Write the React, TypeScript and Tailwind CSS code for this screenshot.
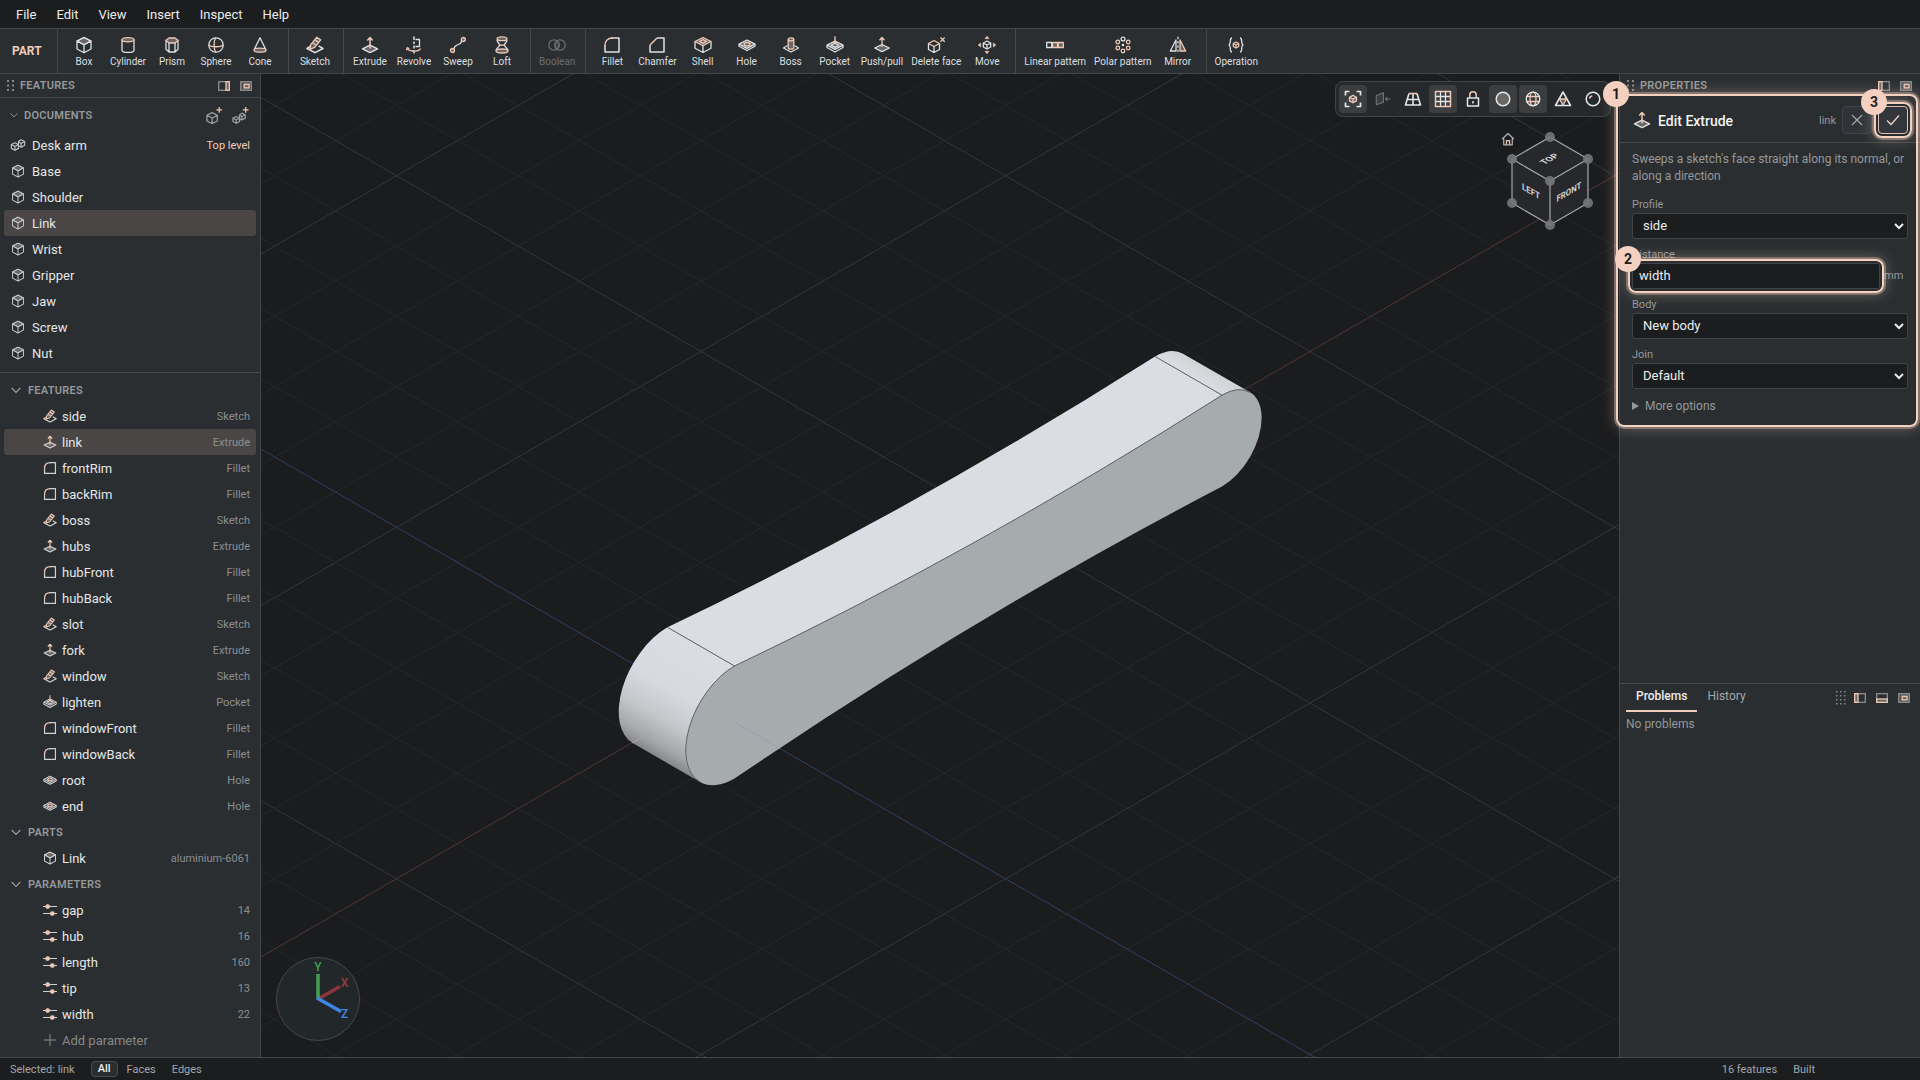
import React from 'react';

const W = '#dde1e3';
const P = '#efc9b6';
const D = '#6b6665';

type IconName =
  | 'box' | 'cylinder' | 'prism' | 'sphere' | 'cone' | 'sketch' | 'extrude' | 'revolve' | 'sweep' | 'loft'
  | 'boolean' | 'fillet' | 'chamfer' | 'shell' | 'hole' | 'boss' | 'pocket' | 'pushpull' | 'deleteface' | 'move'
  | 'linear' | 'polar' | 'mirror' | 'operation' | 'assembly' | 'param' | 'plus' | 'newPart' | 'newAssembly'
  | 'fit' | 'normal' | 'persp' | 'grid' | 'lock' | 'shaded' | 'wire' | 'mesh' | 'material' | 'home';

const icons: Record<IconName, React.ReactNode> = {
  box: (
    <>
      <path d="M9 1.5 16 5 9 8.800 2 5z" fill={D} />
      <path d="M9 1.5 16 5v8l-7 3.700L2 13V5zM2 5l7 3.800L16 5M9 8.800v7.900" />
    </>
  ),
  cylinder: (
    <>
      <path d="M3 3.6v10.600c0 1.300 2.600 2.200 6 2.200s6-.9 6-2.200V3.600" />
      <ellipse cx="9" cy="3.7" rx="6" ry="2.1" stroke={P} fill={D} />
    </>
  ),
  prism: (
    <>
      <path d="M3 4.200v9l3 2.800h6l3-2.800v-9M6 7v9M12 7v9" />
      <path d="M6 2h6l3 2.300L12 7H6L3 4.300z" stroke={P} fill={D} />
    </>
  ),
  sphere: (
    <>
      <circle cx="9" cy="9" r="7.2" />
      <path d="M9 1.800C6.500 4 6.500 14 9 16.200M1.800 9c2.500 2.300 11.900 2.300 14.400 0" stroke={P} />
    </>
  ),
  cone: (
    <>
      <path d="M3 14 9 1.800 15 14" />
      <ellipse cx="9" cy="14.2" rx="6" ry="2" stroke={P} fill={D} />
    </>
  ),
  sketch: (
    <>
      <path d="M4.500 10.200 1 12.500l8 4.200 8-4.200-4.500-2.600" strokeWidth="1.5" />
      <path d="m3.800 13.300.9-4.600L10.700 1.300l4 2.600-6 7.400z" stroke={P} fill={D} />
      <path d="m8.800 3.800 4 2.600M6.500 6.700l3.800 2.500" stroke={P} />
    </>
  ),
  extrude: (
    <>
      <path d="M9 9.200 16.500 12.900 9 16.600 1.500 12.900z" fill={D} strokeWidth="1.5" />
      <path d="M9 12.600V2M6.300 4.500 9 1.600l2.700 2.900" stroke={P} strokeWidth="1.5" />
    </>
  ),
  revolve: (
    <>
      <path d="M9 .5V4M9 5.500V8M9 9.500v3M9 14v3.500" strokeWidth="1.5" />
      <path d="M10.500 3.500h4v7h-4" />
      <path d="M2 11.500c0 4 12 5 13.500 1M2 11.500l-.3 2.700M2 11.500l2.300 1.200" stroke={P} />
    </>
  ),
  sweep: (
    <>
      <path d="M4.800 13C6 7 11 10.500 13 5" />
      <circle cx="3.500" cy="14.500" r="2" stroke={P} fill={D} />
      <circle cx="14.300" cy="3.500" r="2" stroke={P} fill={D} />
    </>
  ),
  loft: (
    <>
      <path d="M4 4c0 2.500 2.500 3 2.500 5S3.500 12 3 14.500M14 4c0 2.500-2.500 3-2.500 5s3 3 3.500 5.500" />
      <ellipse cx="9" cy="2.8" rx="5" ry="1.9" stroke={P} fill={D} />
      <ellipse cx="9" cy="15" rx="6" ry="2" stroke={P} fill={D} />
      <path d="M6.500 8.500c1 1 4 1 5 0" stroke={P} />
    </>
  ),
  boolean: (
    <>
      <path d="M9 4.700a5.300 5.300 0 0 1 0 8.600 5.300 5.300 0 0 1 0-8.600z" fill={D} />
      <circle cx="6" cy="9" r="5.2" />
      <circle cx="12" cy="9" r="5.2" />
    </>
  ),
  fillet: (
    <>
      <path d="M8 2h8v14H2V9" strokeWidth="1.5" />
      <path d="M2 9.500C2 5 5 2 9.500 2" stroke={P} strokeWidth="1.5" />
    </>
  ),
  chamfer: (
    <>
      <path d="M9 2h7v14H2V9" strokeWidth="1.5" />
      <path d="M2 9 9 2" stroke={P} strokeWidth="1.5" />
    </>
  ),
  shell: (
    <>
      <path d="M1 5.500v6.700L9 16.500l8-4.300V5.500M9 10v6.500" />
      <path d="M9 1.500 17 5.500 9 9.800 1 5.500zM5.500 5.500 9 3.700l3.500 1.800L9 7.400z" stroke={P} fill={D} />
    </>
  ),
  hole: (
    <>
      <path d="M9 4 17 8.200 9 12.400 1 8.200z" fill={D} />
      <path d="M1 8.200v2L9 14.500l8-4.300v-2" />
      <ellipse cx="9" cy="8.2" rx="3" ry="1.7" stroke={P} />
    </>
  ),
  boss: (
    <>
      <path d="M5.500 9.500 1.500 12 9 16l7.500-4-4-2.500" />
      <path d="M6.200 3.500v8.300c0 1.800 5.600 1.800 5.600 0V3.500" stroke={P} fill={D} />
      <ellipse cx="9" cy="3.3" rx="2.8" ry="1.5" stroke={P} fill={D} />
    </>
  ),
  pocket: (
    <>
      <path d="M9 5 17 9.200 9 13.400 1 9.200z" fill={D} />
      <path d="M1 9.200v2.300L9 16l8-4.500V9.200M5 9.200 9 7l4 2.200L9 11.400z" />
      <path d="M9 .3v7.200M7.300 5.800 9 7.700l1.700-1.900" stroke={P} />
    </>
  ),
  pushpull: (
    <>
      <path d="M9 8.500 16.300 12 9 15.700 1.700 12z" fill={D} />
      <path d="M9 11V1.800M6.500 4.300 9 1.500l2.500 2.800" stroke={P} />
    </>
  ),
  deleteface: (
    <>
      <path d="M1.500 7.500v6L7 16.500l5.500-3v-6M7 10.500v6" />
      <path d="M7 4.500 12.500 7.500 7 10.500 1.500 7.500z" stroke={P} />
      <path d="m13.500 1.500 4.200 4.200M17.700 1.500l-4.200 4.200" stroke={P} />
    </>
  ),
  move: (
    <>
      <path d="m9 5 3.700 2v4L9 13l-3.700-2V7zM5.300 7 9 9l3.700-2M9 9v4" />
      <path d="M9 .2 7 2.700h4zM9 17.800l2-2.500H7zM.2 9l2.500-2v4zM17.800 9l-2.500 2V7z" fill={P} stroke={P} strokeWidth=".6" />
    </>
  ),
  linear: (
    <>
      <path d="M6.500 6.500h5v5h-5zM12.300 6.500h5v5h-5z" stroke={P} fill={D} />
      <path d="M.7 6.500h5v5h-5z" />
    </>
  ),
  polar: (
    <>
      <circle cx="9" cy="3" r="1.9" />
      <g stroke={P}>
        <circle cx="14.2" cy="6" r="1.8" />
        <circle cx="14.2" cy="12" r="1.8" />
        <circle cx="9" cy="15" r="1.8" />
        <circle cx="3.8" cy="12" r="1.8" />
        <circle cx="3.8" cy="6" r="1.8" />
      </g>
      <circle cx="9" cy="9" r=".7" fill={W} />
    </>
  ),
  mirror: (
    <>
      <path d="M7 4v11H1.300z" />
      <path d="M11 4v11h5.700z" stroke={P} fill={D} />
      <path d="M9 .8v2.500M9 5v2.500M9 9.300v2.500M9 13.500V16" />
    </>
  ),
  operation: (
    <>
      <path d="M5 2C2 2 4.500 8 2 9c2.500 1 0 7 3 7M13 2c3 0 .5 6 3 7-2.500 1 0 7-3 7" />
      <path d="m9 6 2.700 1.500v3L9 12l-2.700-1.500v-3zM6.300 7.500 9 9l2.700-1.500M9 9v3" stroke={P} />
    </>
  ),
  assembly: (
    <>
      <path d="m5.500 6.500 4 2v4.300l-4 2.200-4-2.200V8.500zM1.500 8.500l4 2.200 4-2.200M5.500 10.700V15" />
      <path d="m12.500 3 4 2v4.300l-4 2.200-3-1.600V5zM9 5l3.500 2.200L16.500 5M12.500 7.200v4.300" />
    </>
  ),
  param: (
    <>
      <path d="M0 4.500h18M0 13.500h18" strokeWidth="1.6" />
      <circle cx="6" cy="4.500" r="2.4" fill={P} stroke={P} />
      <circle cx="12" cy="13.500" r="2.4" fill={P} stroke={P} />
    </>
  ),
  plus: <path d="M9 1v16M1 9h16" />,
  newPart: (
    <>
      <path d="M6.500 6 12 8.800v6L6.500 17.600 1 14.800v-6zM1 8.800l5.500 2.900L12 8.800M6.500 11.700v5.900" />
      <path d="M14 0v6M11 3h6" stroke={P} />
    </>
  ),
  newAssembly: (
    <>
      <path d="m4.500 10 3.500 1.700v3.600l-3.500 2-3.500-2v-3.600zM1 11.700l3.500 1.900L8 11.700M4.500 13.600v3.700M10.500 6.500 14 8.200v3.600l-3.500 2L8 12.300V8.200zM7.500 8.200l3 1.900L14 8.200M10.500 10.100v3.700" />
      <path d="M14.500 0v6M11.500 3h6" stroke={P} />
    </>
  ),
  fit: (
    <>
      <path d="M1.500 5.500v-4h4M12.500 1.500h4v4M16.500 12.500v4h-4M5.500 16.500h-4v-4" strokeWidth="1.7" />
      <path d="m9 5.200 3.500 2v3.700L9 12.800l-3.500-1.900V7.200zM5.500 7.200 9 9l3.500-1.800M9 9v3.800" stroke={P} fill={D} />
    </>
  ),
  normal: (
    <>
      <path d="M1.500 5 9.500 2v10.500l-8 3z" fill="#3a3d3f" />
      <path d="M17.500 9H12M14 6.800 11.800 9 14 11.200" />
    </>
  ),
  persp: (
    <>
      <path d="M5 3.500 1.500 15h15L13 3.500M9 3.500V15M3.200 9.500h11.600" strokeWidth="1.6" />
      <path d="M5 3.500h8" stroke={P} strokeWidth="1.6" />
    </>
  ),
  grid: (
    <>
      <path d="M6.500 1.500v15M11.500 1.500v15M1.500 6.500h15M1.500 11.500h15" />
      <path d="M1.500 1.500h15v15h-15z" stroke={P} strokeWidth="1.5" />
    </>
  ),
  lock: (
    <>
      <path d="M3.500 8h11v8h-11zM9 11v2.500" strokeWidth="1.5" />
      <path d="M5.800 8V5a3.200 3.200 0 0 1 6.400 0v3" stroke={P} strokeWidth="1.5" />
    </>
  ),
  shaded: <circle cx="9" cy="9" r="6.8" fill="#6a6867" strokeWidth="1.5" />,
  wire: (
    <>
      <g stroke={P}>
        <ellipse cx="9" cy="9" rx="3" ry="6.8" />
        <path d="M2.500 6.500h13M2.500 11.500h13" />
      </g>
      <circle cx="9" cy="9" r="6.8" />
    </>
  ),
  mesh: (
    <>
      <path d="M9 2 16.500 15.500h-15z" strokeWidth="1.6" />
      <path d="M5.500 9h7L9 15.300zM5.500 9 9 15.300" stroke={P} fill={D} />
    </>
  ),
  material: (
    <>
      <circle cx="9" cy="9" r="6.8" strokeWidth="1.5" />
      <path d="M5.500 8.500c.3-1.600 1.200-2.500 2.800-2.800" stroke={P} strokeWidth="1.6" />
    </>
  ),
  home: (
    <>
      <path d="M1.500 9 9 2l7.500 7M3.500 8v8.500h11V8" strokeWidth="1.6" />
      <path d="M7 16.500V11h4v5.500" stroke={P} strokeWidth="1.6" />
    </>
  ),
};

function Icon({ name, className = 'size-[18px]', color = W }: { name: IconName; className?: string; color?: string }) {
  return (
    <svg
      viewBox="0 0 18 18"
      className={`${className} shrink-0`}
      fill="none"
      stroke={color}
      strokeWidth="1.3"
      strokeLinejoin="round"
      aria-hidden="true"
    >
      {icons[name]}
    </svg>
  );
}

type Tool = [IconName, string];
const toolGroups: Tool[][] = [
  [['box', 'Box'], ['cylinder', 'Cylinder'], ['prism', 'Prism'], ['sphere', 'Sphere'], ['cone', 'Cone']],
  [['sketch', 'Sketch']],
  [['extrude', 'Extrude'], ['revolve', 'Revolve'], ['sweep', 'Sweep'], ['loft', 'Loft']],
  [['boolean', 'Boolean']],
  [
    ['fillet', 'Fillet'], ['chamfer', 'Chamfer'], ['shell', 'Shell'], ['hole', 'Hole'], ['boss', 'Boss'],
    ['pocket', 'Pocket'], ['pushpull', 'Push/pull'], ['deleteface', 'Delete face'], ['move', 'Move'],
  ],
  [['linear', 'Linear pattern'], ['polar', 'Polar pattern'], ['mirror', 'Mirror']],
  [['operation', 'Operation']],
];

const documents = ['Base', 'Shoulder', 'Link', 'Wrist', 'Gripper', 'Jaw', 'Screw', 'Nut'];

const features: [string, string, IconName][] = [
  ['side', 'Sketch', 'sketch'],
  ['link', 'Extrude', 'extrude'],
  ['frontRim', 'Fillet', 'fillet'],
  ['backRim', 'Fillet', 'fillet'],
  ['boss', 'Sketch', 'sketch'],
  ['hubs', 'Extrude', 'extrude'],
  ['hubFront', 'Fillet', 'fillet'],
  ['hubBack', 'Fillet', 'fillet'],
  ['slot', 'Sketch', 'sketch'],
  ['fork', 'Extrude', 'extrude'],
  ['window', 'Sketch', 'sketch'],
  ['lighten', 'Pocket', 'pocket'],
  ['windowFront', 'Fillet', 'fillet'],
  ['windowBack', 'Fillet', 'fillet'],
  ['root', 'Hole', 'hole'],
  ['end', 'Hole', 'hole'],
];

const parameters: [string, number][] = [['gap', 14], ['hub', 16], ['length', 160], ['tip', 13], ['width', 22]];

const viewTools: [IconName, string, boolean][] = [
  ['fit', 'Zoom to fit', true],
  ['normal', 'Look at face', false],
  ['persp', 'Perspective', false],
  ['grid', 'Grid', true],
  ['lock', 'Lock view', false],
  ['shaded', 'Shaded', true],
  ['wire', 'Edges', true],
  ['mesh', 'Mesh', false],
  ['material', 'Material', false],
];

function Chevron({ className }: { className: string }) {
  return (
    <svg viewBox="0 0 10 10" className={className} fill="none" stroke="#9a9da0" strokeWidth="1.2" aria-hidden="true">
      <path d="M.7 3 5 7.300 9.300 3" />
    </svg>
  );
}

function Grip() {
  return (
    <svg viewBox="0 0 7 11" className="h-[11px] w-[7px]" fill="#85888a" aria-hidden="true">
      {[0, 4.5, 9].map((y) => (
        <React.Fragment key={y}>
          <rect x="0" y={y} width="2" height="2" />
          <rect x="5" y={y} width="2" height="2" />
        </React.Fragment>
      ))}
    </svg>
  );
}

function DockButton({ side }: { side: 'left' | 'right' | 'bottom' | 'float' }) {
  return (
    <button type="button" aria-label={`Dock ${side}`} className="h-[10px] w-3">
      <svg viewBox="0 0 12 10" className="h-[10px] w-3" fill="none" stroke="#8b8d8f" strokeWidth="1.3">
        <rect x=".7" y=".7" width="10.6" height="8.6" fill={side === 'float' ? '#55504f' : 'none'} />
        {side === 'left' && <rect x=".7" y=".7" width="3.3" height="8.6" stroke={P} fill={D} />}
        {side === 'right' && <rect x="8" y=".7" width="3.3" height="8.6" stroke={P} fill={D} />}
        {side === 'bottom' && <rect x=".7" y="6" width="10.6" height="3.3" stroke={P} fill={D} />}
        {side === 'float' && <rect x="4.2" y="3.3" width="4.8" height="3.6" stroke={P} fill={D} />}
      </svg>
    </button>
  );
}

function SectionTitle({ children }: { children: React.ReactNode }) {
  return (
    <h3 className="flex h-[26px] items-center gap-[7px] pl-[11px] text-[11px] font-semibold tracking-wide text-[#95989a]">
      <Chevron className="size-[10px]" />
      <span className="pt-0.5">{children}</span>
    </h3>
  );
}

function TreeRow({ icon, label, note, selected }: { icon: IconName; label: string; note: React.ReactNode; selected?: boolean }) {
  return (
    <li className={`mx-1 flex h-[26px] items-center rounded-[3px] pr-1.5 pl-[39px] ${selected ? 'bg-[#4a4646]' : ''}`}>
      <Icon name={icon} className="size-[14px]" color="#cfd2d4" />
      <span className="ml-[5px] flex-1 pt-0.5 text-[#e4e6e7]">{label}</span>
      <span className="pt-0.5 text-[11px] text-[#8b8e90]">{note}</span>
    </li>
  );
}

function Callout({ n, className }: { n: number; className: string }) {
  return (
    <div
      className={`pointer-events-none absolute z-20 rounded-lg border-2 border-[#f3d2c2] shadow-[0_0_0_2px_rgba(243,208,191,0.35),0_0_14px_2px_rgba(243,208,191,0.3)] ${className}`}
    >
      <span className="absolute -top-[15px] -left-[15px] flex size-[26px] items-center justify-center rounded-full bg-[#f3d0bf] text-sm font-bold text-[#1b1d1e]">
        {n}
      </span>
    </div>
  );
}

const fieldClass =
  'h-[26px] w-full rounded-[3px] border border-[#404446] bg-[#1b1d1e] px-1.5 pb-0.5 text-[13px] text-[#eceded] [color-scheme:dark]';
const labelClass = 'pt-0.5 text-[11px] leading-4 text-[#95989a]';

function SelectField({ id, label, value }: { id: string; label: string; value: string }) {
  return (
    <div className="flex flex-col">
      <label htmlFor={id} className={labelClass}>{label}</label>
      <select id={id} className={fieldClass} defaultValue={value}>
        <option>{value}</option>
      </select>
    </div>
  );
}

const OX = 701;
const OY = 703;
const GX = 121.8;
const GY = 70.3;

function GridLines() {
  const lines: React.ReactNode[] = [];
  for (let k = -22; k <= 22; k++) {
    if (k === 0) continue;
    const stroke = k % 5 === 0 ? '#33373a' : '#25282a';
    const cx = OX + k * GX;
    lines.push(
      <path key={k} stroke={stroke} d={`M${cx - 20 * GX} ${OY + 20 * GY}L${cx + 20 * GX} ${OY - 20 * GY}M${cx - 20 * GX} ${OY - 20 * GY}L${cx + 20 * GX} ${OY + 20 * GY}`} />,
    );
  }
  return <g>{lines}</g>;
}

function Model() {
  return (
    <svg viewBox="261 74 1358 983" preserveAspectRatio="xMidYMid slice" className="absolute inset-0 size-full" role="img" aria-label="Link part">
      <defs>
        <linearGradient id="hubShade" gradientUnits="userSpaceOnUse" x1="8" y1="8" x2="-11.31" y2="-11.31">
          <stop offset="0" stopColor="#dadde3" />
          <stop offset=".45" stopColor="#d6d9df" />
          <stop offset=".7" stopColor="#c3c7ca" />
          <stop offset=".9" stopColor="#a3a6a8" />
          <stop offset="1" stopColor="#858789" />
        </linearGradient>
        <linearGradient id="tipShade" gradientUnits="userSpaceOnUse" x1="86.5" y1="86.5" x2="89.2" y2="89.2">
          <stop offset="0" stopColor="#dadde3" />
          <stop offset="1" stopColor="#d0d3d5" />
        </linearGradient>
      </defs>
      <GridLines />
      <path d={`M${OX - 20 * GX} ${OY + 20 * GY}L${OX + 20 * GX} ${OY - 20 * GY}`} stroke="#54333a" />
      <path d={`M${OX - 20 * GX} ${OY - 20 * GY}L${OX + 20 * GX} ${OY + 20 * GY}`} stroke="#2e4064" />
      <g transform="matrix(3.047 -1.759 0 -3.518 734.5 722.3)">
        <path d="M0 16Q80 9 160 13L138 35Q58 31-22 38z" fill="#dadde3" />
        <path d="M0 16A16 16 0 0 1-11.310-11.310L-33.310 10.690A16 16 0 0 0-22 38z" fill="url(#hubShade)" />
        <path d="M160 13A13 13 0 0 0 169.190 9.190L147.190 31.190A13 13 0 0 1 138 35z" fill="url(#tipShade)" />
        <path d="M0 16Q80 9 160 13A13 13 0 0 0 160-13Q80-9 0-16A16 16 0 0 0 0 16z" fill="#a6abae" />
        <path
          d="M-22 38 0 16Q80 9 160 13L138 35M0 16A16 16 0 0 1-11.310-11.310M160 13A13 13 0 0 0 169.190 9.190"
          fill="none"
          stroke="#63686d"
          vectorEffect="non-scaling-stroke"
        />
      </g>
      <path d="M735 722.500 780 748.500" stroke="#9aa0b4" />
      <path d="M632 743 652 731.500" stroke="#b3a3a6" />
    </svg>
  );
}

function ViewCube() {
  return (
    <svg viewBox="0 0 90 100" className="absolute top-[57px] right-[24px] h-[100px] w-[90px]" fontFamily="Roboto, sans-serif" aria-label="View cube">
      <g stroke="#a5a7a9" strokeWidth="1.2" strokeLinejoin="round">
        <path d="M45 6 83 28 45 50 7 28zM7 28 45 50V94L7 72zM83 28 45 50V94L83 72z" fill="#26282b" />
      </g>
      <g fill="#76777a" fillOpacity=".9">
        {[[45, 6], [7, 28], [83, 28], [45, 50], [7, 72], [83, 72], [45, 94]].map(([x, y]) => (
          <circle key={`${x}-${y}`} cx={x} cy={y} r="5" />
        ))}
      </g>
      <g fill="#d0d2d3" fontSize="9" fontWeight="700" textAnchor="middle">
        <text transform="matrix(.866 -.5 .866 .5 44.5 28)" y="3">TOP</text>
        <text transform="matrix(.866 .5 0 1 26 60.5)" y="3">LEFT</text>
        <text transform="matrix(.866 -.5 0 1 64 61)" y="3">FRONT</text>
      </g>
    </svg>
  );
}

function Gizmo() {
  return (
    <svg viewBox="0 0 84 84" className="absolute bottom-4 left-[15px] size-[84px]" fontFamily="Roboto, sans-serif" fontSize="12" fontWeight="500" textAnchor="middle" aria-label="Axes">
      <circle cx="42" cy="42" r="41.5" fill="#22272a" stroke="#44484a" />
      <path d="M42 42 64 29.500" stroke="#8d363d" strokeWidth="3.5" />
      <path d="M42 42V17" stroke="#42a058" strokeWidth="3.5" />
      <path d="M41 41 65 54.500" stroke="#3d86e8" strokeWidth="3.5" />
      <text x="42" y="14" fill="#42a058">Y</text>
      <text x="68.5" y="30" fill="#9a3a41">X</text>
      <text x="68.5" y="61" fill="#3d86e8">Z</text>
    </svg>
  );
}

export default function App() {
  return (
    <div className="flex h-screen flex-col bg-[#1b1d1e] font-[Roboto,sans-serif] text-[13px] text-[#e4e6e7]">
      <nav className="flex h-[29px] shrink-0 items-center gap-5 border-b border-[#44484a] px-4 pt-0.5 text-[#eceded]">
        {['File', 'Edit', 'View', 'Insert', 'Inspect', 'Help'].map((m) => (
          <button key={m} type="button">{m}</button>
        ))}
      </nav>

      <div className="flex h-[45px] shrink-0 border-b border-[#44484a] bg-[#2a2e30]">
        <div className="flex w-[58px] items-center border-r border-[#44484a] pl-3 text-xs font-bold text-[#f0cdbb]">PART</div>
        {toolGroups.map((group, i) => (
          <div key={i} className={`flex pr-1.5 pl-1 ${i < toolGroups.length - 1 ? 'border-r border-[#44484a]' : ''}`}>
            {group.map(([icon, label]) => (
              <button
                key={label}
                type="button"
                disabled={icon === 'boolean'}
                className="flex min-w-11 flex-col items-center gap-px px-1 pt-[7px] text-[10px] leading-[14px] text-[#dcdfe0] disabled:opacity-35"
              >
                <Icon name={icon} />
                {label}
              </button>
            ))}
          </div>
        ))}
      </div>

      <div className="flex min-h-0 flex-1">
        <aside className="flex w-[261px] shrink-0 flex-col border-r border-[#44484a] bg-[#2a2e30]">
          <header className="flex h-6 shrink-0 items-center border-b border-[#44484a] pr-2 pl-[7px]">
            <Grip />
            <h2 className="ml-1.5 flex-1 pt-px text-[11px] font-semibold tracking-wide text-[#95989a]">FEATURES</h2>
            <div className="flex gap-[10px]">
              <DockButton side="right" />
              <DockButton side="float" />
            </div>
          </header>
          <section className="border-b border-[#44484a] pb-1.5">
            <div className="flex h-[34px] items-center pr-[11px] pl-[10px]">
              <Chevron className="size-2" />
              <h3 className="ml-1.5 flex-1 pt-0.5 text-[11px] font-semibold tracking-wide text-[#95989a]">DOCUMENTS</h3>
              <button type="button" aria-label="New part"><Icon name="newPart" className="size-[17px]" color="#9c9fa1" /></button>
              <button type="button" aria-label="New assembly" className="ml-[9px]"><Icon name="newAssembly" className="size-[17px]" color="#9c9fa1" /></button>
            </div>
            <ul>
              <li className="mx-1 flex h-[26px] items-center gap-1.5 pr-1.5 pl-1.5">
                <Icon name="assembly" className="size-4" color="#bfc2c4" />
                <span className="flex-1 pt-0.5">Desk arm</span>
                <span className="pt-0.5 text-[11px] text-[#f0cdbb]">Top level</span>
              </li>
              {documents.map((d) => (
                <li key={d} className={`mx-1 flex h-[26px] items-center gap-[7px] rounded-[3px] pl-[7px] ${d === 'Link' ? 'bg-[#4a4646]' : ''}`}>
                  <Icon name="box" className="size-[14px]" color="#c4c7c9" />
                  <span className="pt-0.5">{d}</span>
                </li>
              ))}
            </ul>
          </section>
          <section className="pt-1">
            <SectionTitle>FEATURES</SectionTitle>
            <ul>
              {features.map(([label, kind, icon]) => (
                <TreeRow key={label} icon={icon} label={label} note={kind} selected={label === 'link'} />
              ))}
            </ul>
            <SectionTitle>PARTS</SectionTitle>
            <ul><TreeRow icon="box" label="Link" note="aluminium-6061" /></ul>
            <SectionTitle>PARAMETERS</SectionTitle>
            <ul>
              {parameters.map(([label, value]) => (
                <TreeRow key={label} icon="param" label={label} note={value} />
              ))}
            </ul>
            <button type="button" className="ml-[43px] flex h-[26px] items-center gap-[5px] text-[#85888a]">
              <Icon name="plus" className="size-[14px]" color="#85888a" />
              <span className="pt-0.5">Add parameter</span>
            </button>
          </section>
        </aside>

        <main className="relative min-w-0 flex-1 overflow-hidden bg-[#1b1c1e]">
          <Model />
          <div className="absolute top-[7px] right-2 flex gap-0.5 rounded-lg border border-[#404446] bg-[#26292b] p-[3px]">
            {viewTools.map(([icon, label, active]) => (
              <button
                key={icon}
                type="button"
                aria-label={label}
                aria-pressed={active}
                className={`flex size-7 items-center justify-center rounded-[4px] ${active ? 'bg-[#3b3d3f]' : ''}`}
              >
                <Icon name={icon} className={icon === 'normal' ? 'size-4' : 'size-[18px]'} color={icon === 'normal' ? '#6d7072' : '#e4e7e8'} />
              </button>
            ))}
          </div>
          <button type="button" aria-label="Home view" className="absolute top-[58px] right-[104px]">
            <Icon name="home" className="size-[14px]" color="#aeb0b2" />
          </button>
          <ViewCube />
          <Gizmo />
        </main>

        <aside className="flex w-[301px] shrink-0 flex-col border-l border-[#44484a] bg-[#2a2e30]">
          <header className="flex h-6 shrink-0 items-center pr-2 pb-px pl-[7px]">
            <Grip />
            <h2 className="ml-1.5 flex-1 pt-px text-[11px] font-semibold tracking-wide text-[#95989a]">PROPERTIES</h2>
            <div className="flex gap-[10px]">
              <DockButton side="left" />
              <DockButton side="float" />
            </div>
          </header>
          <section className="relative pb-2">
            <Callout n={1} className="-top-1 right-0.5 -bottom-1 -left-1" />
            <div className="flex h-[45px] items-center border-b border-[#44484a] pr-3 pl-[13px]">
              <Icon name="extrude" />
              <h2 className="ml-[7px] flex-1 pt-px text-sm font-medium text-[#f2f3f3]">Edit Extrude</h2>
              <span className="mr-1.5 pt-0.5 text-[11px] text-[#95989a]">link</span>
              <button type="button" aria-label="Cancel" className="flex h-7 w-[30px] items-center justify-center rounded-[4px] border border-[#404347] bg-[#303438]">
                <svg viewBox="0 0 12 12" className="size-3" fill="none" stroke="#a5a7a9" strokeWidth="1.2"><path d="m1 1 10 10M11 1 1 11" /></svg>
              </button>
              <div className="relative ml-1.5">
                <button type="button" aria-label="Apply" className="flex h-7 w-[30px] items-center justify-center rounded-[4px] border border-[#e0c2b5] bg-[#33363b]">
                  <svg viewBox="0 0 14 12" className="h-3 w-[14px]" fill="none" stroke="#f0d3c5" strokeWidth="1.3"><path d="m1 6.500 4 4L13 1.500" /></svg>
                </button>
                <Callout n={3} className="-inset-1" />
              </div>
            </div>
            <div className="flex flex-col gap-1.5 px-3 pt-2">
              <p className="mb-1 text-xs leading-[17px] text-[#95989a]">Sweeps a sketch's face straight along its normal, or along a direction</p>
              <SelectField id="profile" label="Profile" value="side" />
              <div className="flex flex-col">
                <label htmlFor="distance" className={labelClass}>Distance</label>
                <div className="flex items-center gap-1">
                  <div className="relative flex-1">
                    <input id="distance" type="text" defaultValue="width" className={fieldClass} />
                    <Callout n={2} className="-inset-1" />
                  </div>
                  <span className="w-6 text-[11px] text-[#95989a]">mm</span>
                </div>
              </div>
              <SelectField id="body" label="Body" value="New body" />
              <SelectField id="join" label="Join" value="Default" />
              <button type="button" className="mt-0.5 flex items-center gap-1.5 self-start text-xs leading-[18px] text-[#95989a]">
                <svg viewBox="0 0 7 8" className="h-2 w-[7px]" fill="#95989a"><path d="M0 0 7 4 0 8z" /></svg>
                More options
              </button>
            </div>
          </section>

          <section className="mt-auto h-[374px] border-t border-[#44484a] px-1.5 text-xs">
            <div className="flex items-center">
              <div role="tablist" className="flex flex-1">
                <button type="button" role="tab" aria-selected="true" className="h-7 border-b-2 border-[#f0cdbb] px-[10px] pb-0.5 font-medium text-[#eceded]">Problems</button>
                <button type="button" role="tab" aria-selected="false" className="h-7 px-[10px] pb-1 text-[#a3a6a8]">History</button>
              </div>
              <svg viewBox="0 0 10 14" className="mr-2 h-[14px] w-[10px]" fill="#85888a" aria-hidden="true">
                {[0, 4, 8, 12].map((y) => [0, 4, 8].map((x) => <rect key={`${x}-${y}`} x={x} y={y} width="1.5" height="1.5" />))}
              </svg>
              <div className="mr-1 flex gap-[10px]">
                <DockButton side="left" />
                <DockButton side="bottom" />
                <DockButton side="float" />
              </div>
            </div>
            <p className="mt-[3px] leading-[18px] text-[#95989a]">No problems</p>
          </section>
        </aside>
      </div>

      <footer className="flex h-[23px] shrink-0 items-center border-t border-[#44484a] pl-[10px] text-[11px] text-[#a3a6a8]">
        <span className="pt-0.5">Selected: link</span>
        <button type="button" className="ml-4 h-4 rounded-[4px] border border-[#4a4d50] bg-[#2a2c2e] px-1.5 leading-[14px] font-medium text-[#eceded]">All</button>
        <button type="button" className="ml-[9px] pt-0.5">Faces</button>
        <button type="button" className="ml-4 pt-0.5">Edges</button>
        <span className="mr-4 ml-auto pt-0.5">16 features</span>
        <span className="mr-[105px] pt-0.5">Built</span>
      </footer>
    </div>
  );
}
